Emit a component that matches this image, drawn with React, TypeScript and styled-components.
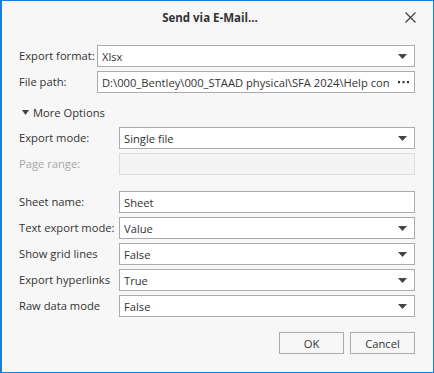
import styled, { createGlobalStyle } from "styled-components";

const GlobalStyle = createGlobalStyle`
  html, body {
    margin: 0;
    padding: 0;
    background: #ffffff;
  }
  body {
    font-family: "Open Sans", "Noto Sans", "Liberation Sans", sans-serif;
    font-size: 11.2px;
    color: #333333;
  }
`;

const Dialog = styled.div`
  box-sizing: border-box;
  width: 434px;
  height: 373px;
  border: 1px solid #1a7fd4;
  border-left-width: 2px;
  background: #f7f7f7;
  display: flex;
  flex-direction: column;
`;

const TitleBar = styled.div`
  height: 33px;
  display: grid;
  grid-template-columns: 1fr auto 1fr;
  align-items: center;
  padding: 0 17px 0 0;
`;

const Title = styled.div`
  grid-column: 2;
  font-weight: 700;
  font-size: 11.5px;
  color: #333333;
  padding-left: 2px;
`;

const CloseButton = styled.button`
  grid-column: 3;
  justify-self: end;
  width: 12px;
  height: 12px;
  padding: 0;
  border: none;
  background: transparent;
  display: flex;
  align-items: center;
  justify-content: center;
  cursor: pointer;
`;

const Body = styled.div`
  flex: 1;
  padding: 11px 18px 0 17px;
  display: flex;
  flex-direction: column;
`;

const FormGrid = styled.div<{ $labelWidth: number }>`
  display: grid;
  grid-template-columns: ${({ $labelWidth }) => $labelWidth}px 1fr;
  row-gap: 4px;
  align-items: center;
`;

const Label = styled.label<{ $disabled?: boolean }>`
  color: ${({ $disabled }) => ($disabled ? "#a6a6a6" : "#333333")};
  white-space: nowrap;
  line-height: 22px;
`;

const Field = styled.div<{ $disabled?: boolean }>`
  box-sizing: border-box;
  height: 22px;
  border: 1px solid ${({ $disabled }) => ($disabled ? "#dcdcdc" : "#ababab")};
  background: ${({ $disabled }) => ($disabled ? "#f4f4f4" : "#ffffff")};
  display: flex;
  align-items: center;
  padding: 0 4px 0 4px;
  color: #333333;
  min-width: 0;
`;

const FieldText = styled.span`
  flex: 1;
  min-width: 0;
  overflow: hidden;
  white-space: nowrap;
`;

const Expander = styled.div`
  height: 18px;
  margin: 10px 0 6px 3px;
  display: flex;
  align-items: center;
  gap: 4px;
  color: #333333;
`;

const Spacer = styled.div`
  grid-column: 1 / -1;
  height: 8px;
`;

const ButtonRow = styled.div`
  display: flex;
  justify-content: flex-end;
  gap: 6px;
  margin-top: 15px;
`;

const Button = styled.button`
  box-sizing: border-box;
  width: 65px;
  height: 22px;
  border: 1px solid #acacac;
  background: #f7f7f7;
  font-family: inherit;
  font-size: 11.2px;
  color: #333333;
  padding: 0;
`;

const Arrow = () => (
  <svg width="9" height="5" viewBox="0 0 9 5" style={{ marginRight: 3 }}>
    <path d="M0 0 H9 L4.5 5 Z" fill="#444444" />
  </svg>
);

const Dots = () => (
  <svg width="11" height="3" viewBox="0 0 11 3" style={{ marginLeft: 4, marginRight: 1 }}>
    <rect x="0" y="0" width="2" height="2.2" fill="#333333" />
    <rect x="4.5" y="0" width="2" height="2.2" fill="#333333" />
    <rect x="9" y="0" width="2" height="2.2" fill="#333333" />
  </svg>
);

const ComboBox = ({ value }: { value: string }) => (
  <Field>
    <FieldText>{value}</FieldText>
    <Arrow />
  </Field>
);

const App = () => {
  return (
    <>
      <GlobalStyle />
      <Dialog>
        <TitleBar>
          <Title>Send via E-Mail...</Title>
          <CloseButton aria-label="Close">
            <svg width="11" height="11" viewBox="0 0 11 11">
              <path
                d="M0.5 0.5 L10.5 10.5 M10.5 0.5 L0.5 10.5"
                stroke="#444444"
                strokeWidth="1.3"
              />
            </svg>
          </CloseButton>
        </TitleBar>
        <Body>
          <FormGrid $labelWidth={78}>
            <Label>Export format:</Label>
            <ComboBox value="Xlsx" />
            <Label>File path:</Label>
            <Field>
              <FieldText>D:\000_Bentley\000_STAAD physical\SFA 2024\Help con</FieldText>
              <Dots />
            </Field>
          </FormGrid>

          <Expander>
            <svg width="7" height="5" viewBox="0 0 7 5">
              <path d="M0 0 H7 L3.5 5 Z" fill="#444444" />
            </svg>
            More Options
          </Expander>

          <FormGrid $labelWidth={100}>
            <Label>Export mode:</Label>
            <ComboBox value="Single file" />
            <Label $disabled>Page range:</Label>
            <Field $disabled />
            <Spacer />
            <Label>Sheet name:</Label>
            <Field>
              <FieldText>Sheet</FieldText>
            </Field>
            <Label>Text export mode:</Label>
            <ComboBox value="Value" />
            <Label>Show grid lines</Label>
            <ComboBox value="False" />
            <Label>Export hyperlinks</Label>
            <ComboBox value="True" />
            <Label>Raw data mode</Label>
            <ComboBox value="False" />
          </FormGrid>

          <ButtonRow>
            <Button>OK</Button>
            <Button>Cancel</Button>
          </ButtonRow>
        </Body>
      </Dialog>
    </>
  );
};

export default App;
